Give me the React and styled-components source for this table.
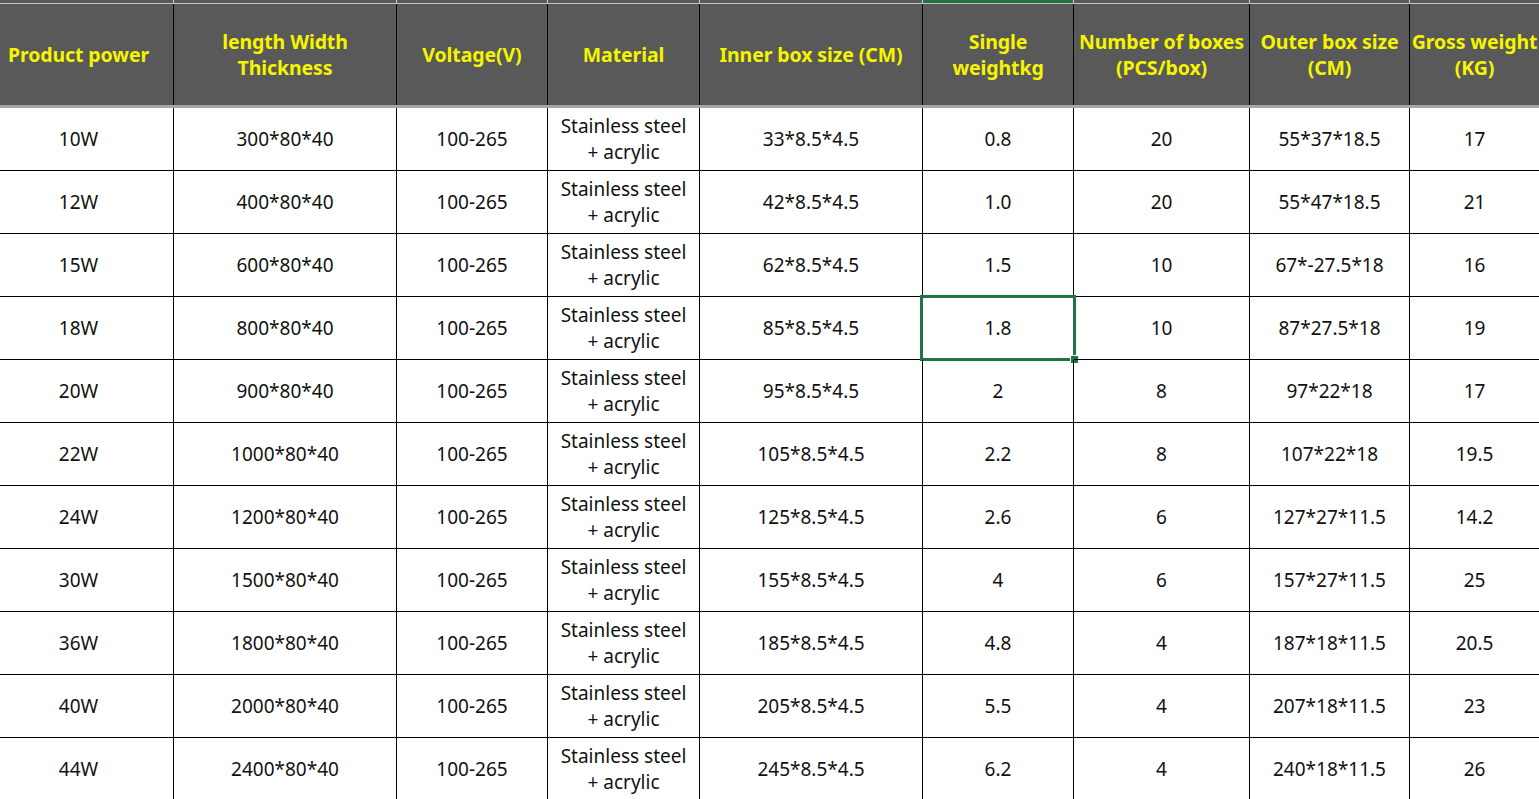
import React from "react";
import styled, { createGlobalStyle } from "styled-components";

const Global = createGlobalStyle`
  html, body { margin: 0; padding: 0; background: #fff; }
  body { font-family: "Noto Sans", "Open Sans", sans-serif; overflow: hidden; }
`;

const COLS = "190px 223px 151px 152px 223px 151px 176px 160px 129px";

const Viewport = styled.div`
  width: 1539px;
  height: 799px;
  overflow: hidden;
`;

const Sheet = styled.div`
  width: 1555px;
  margin-left: -16px;
`;

const Strip = styled.div`
  display: grid;
  grid-template-columns: ${COLS};
  height: 3px;
`;

const StripCell = styled.div`
  background: ${(p) => (p.$active ? "#217346" : "#595959")};
  border-right: 1px solid #d0d0d0;
  &:last-child { border-right: none; }
`;

const HeaderRow = styled.div`
  display: grid;
  grid-template-columns: ${COLS};
  border-top: 1px solid #c4c4c4;
  border-bottom: 3px solid #a6a6a6;
`;

const HeadCell = styled.div`
  height: 101px;
  background: #595959;
  border-right: 1px solid #000;
  display: flex;
  align-items: center;
  justify-content: center;
  text-align: center;
  color: #f5f500;
  font-weight: 700;
  font-size: 19.5px;
  line-height: 26px;
  white-space: pre-line;
  letter-spacing: -0.1px;
  &:last-child { border-right: none; }
`;

const Row = styled.div`
  display: grid;
  grid-template-columns: ${COLS};
`;

const Cell = styled.div`
  position: relative;
  height: 62px;
  border-right: 1px solid #000;
  border-bottom: 1px solid #000;
  display: flex;
  align-items: center;
  justify-content: center;
  text-align: center;
  color: #111;
  font-size: 19px;
  line-height: 26px;
  white-space: pre-line;
  &:last-child { border-right: none; }
`;

const Selection = styled.div`
  position: absolute;
  left: -3px;
  top: -2px;
  right: -3px;
  bottom: -2px;
  border: 3px solid #217346;
  pointer-events: none;
`;

const Handle = styled.div`
  position: absolute;
  right: -6px;
  bottom: -6px;
  width: 7px;
  height: 7px;
  background: #217346;
  border: 1px solid #fff;
`;

const headers = [
  "Product power",
  "length Width\nThickness",
  "Voltage(V)",
  "Material",
  "Inner box size (CM)",
  "Single\nweightkg",
  "Number of boxes\n(PCS/box)",
  "Outer box size\n(CM)",
  "Gross weight\n(KG)",
];

const data = [
  ["10W", "300*80*40", "33*8.5*4.5", "0.8", "20", "55*37*18.5", "17"],
  ["12W", "400*80*40", "42*8.5*4.5", "1.0", "20", "55*47*18.5", "21"],
  ["15W", "600*80*40", "62*8.5*4.5", "1.5", "10", "67*-27.5*18", "16"],
  ["18W", "800*80*40", "85*8.5*4.5", "1.8", "10", "87*27.5*18", "19"],
  ["20W", "900*80*40", "95*8.5*4.5", "2", "8", "97*22*18", "17"],
  ["22W", "1000*80*40", "105*8.5*4.5", "2.2", "8", "107*22*18", "19.5"],
  ["24W", "1200*80*40", "125*8.5*4.5", "2.6", "6", "127*27*11.5", "14.2"],
  ["30W", "1500*80*40", "155*8.5*4.5", "4", "6", "157*27*11.5", "25"],
  ["36W", "1800*80*40", "185*8.5*4.5", "4.8", "4", "187*18*11.5", "20.5"],
  ["40W", "2000*80*40", "205*8.5*4.5", "5.5", "4", "207*18*11.5", "23"],
  ["44W", "2400*80*40", "245*8.5*4.5", "6.2", "4", "240*18*11.5", "26"],
];

export default function App() {
  return (
    <Viewport>
      <Global />
      <Sheet>
        <Strip>
          {headers.map((_, i) => (
            <StripCell key={i} $active={i === 5} />
          ))}
        </Strip>
        <HeaderRow>
          {headers.map((h) => (
            <HeadCell key={h}>{h}</HeadCell>
          ))}
        </HeaderRow>
        {data.map((r, ri) => {
          const cells = [r[0], r[1], "100-265", "Stainless steel\n+ acrylic", r[2], r[3], r[4], r[5], r[6]];
          return (
            <Row key={ri}>
              {cells.map((c, ci) => (
                <Cell key={ci}>
                  {c}
                  {ri === 3 && ci === 5 && (
                    <Selection>
                      <Handle />
                    </Selection>
                  )}
                </Cell>
              ))}
            </Row>
          );
        })}
      </Sheet>
    </Viewport>
  );
}
